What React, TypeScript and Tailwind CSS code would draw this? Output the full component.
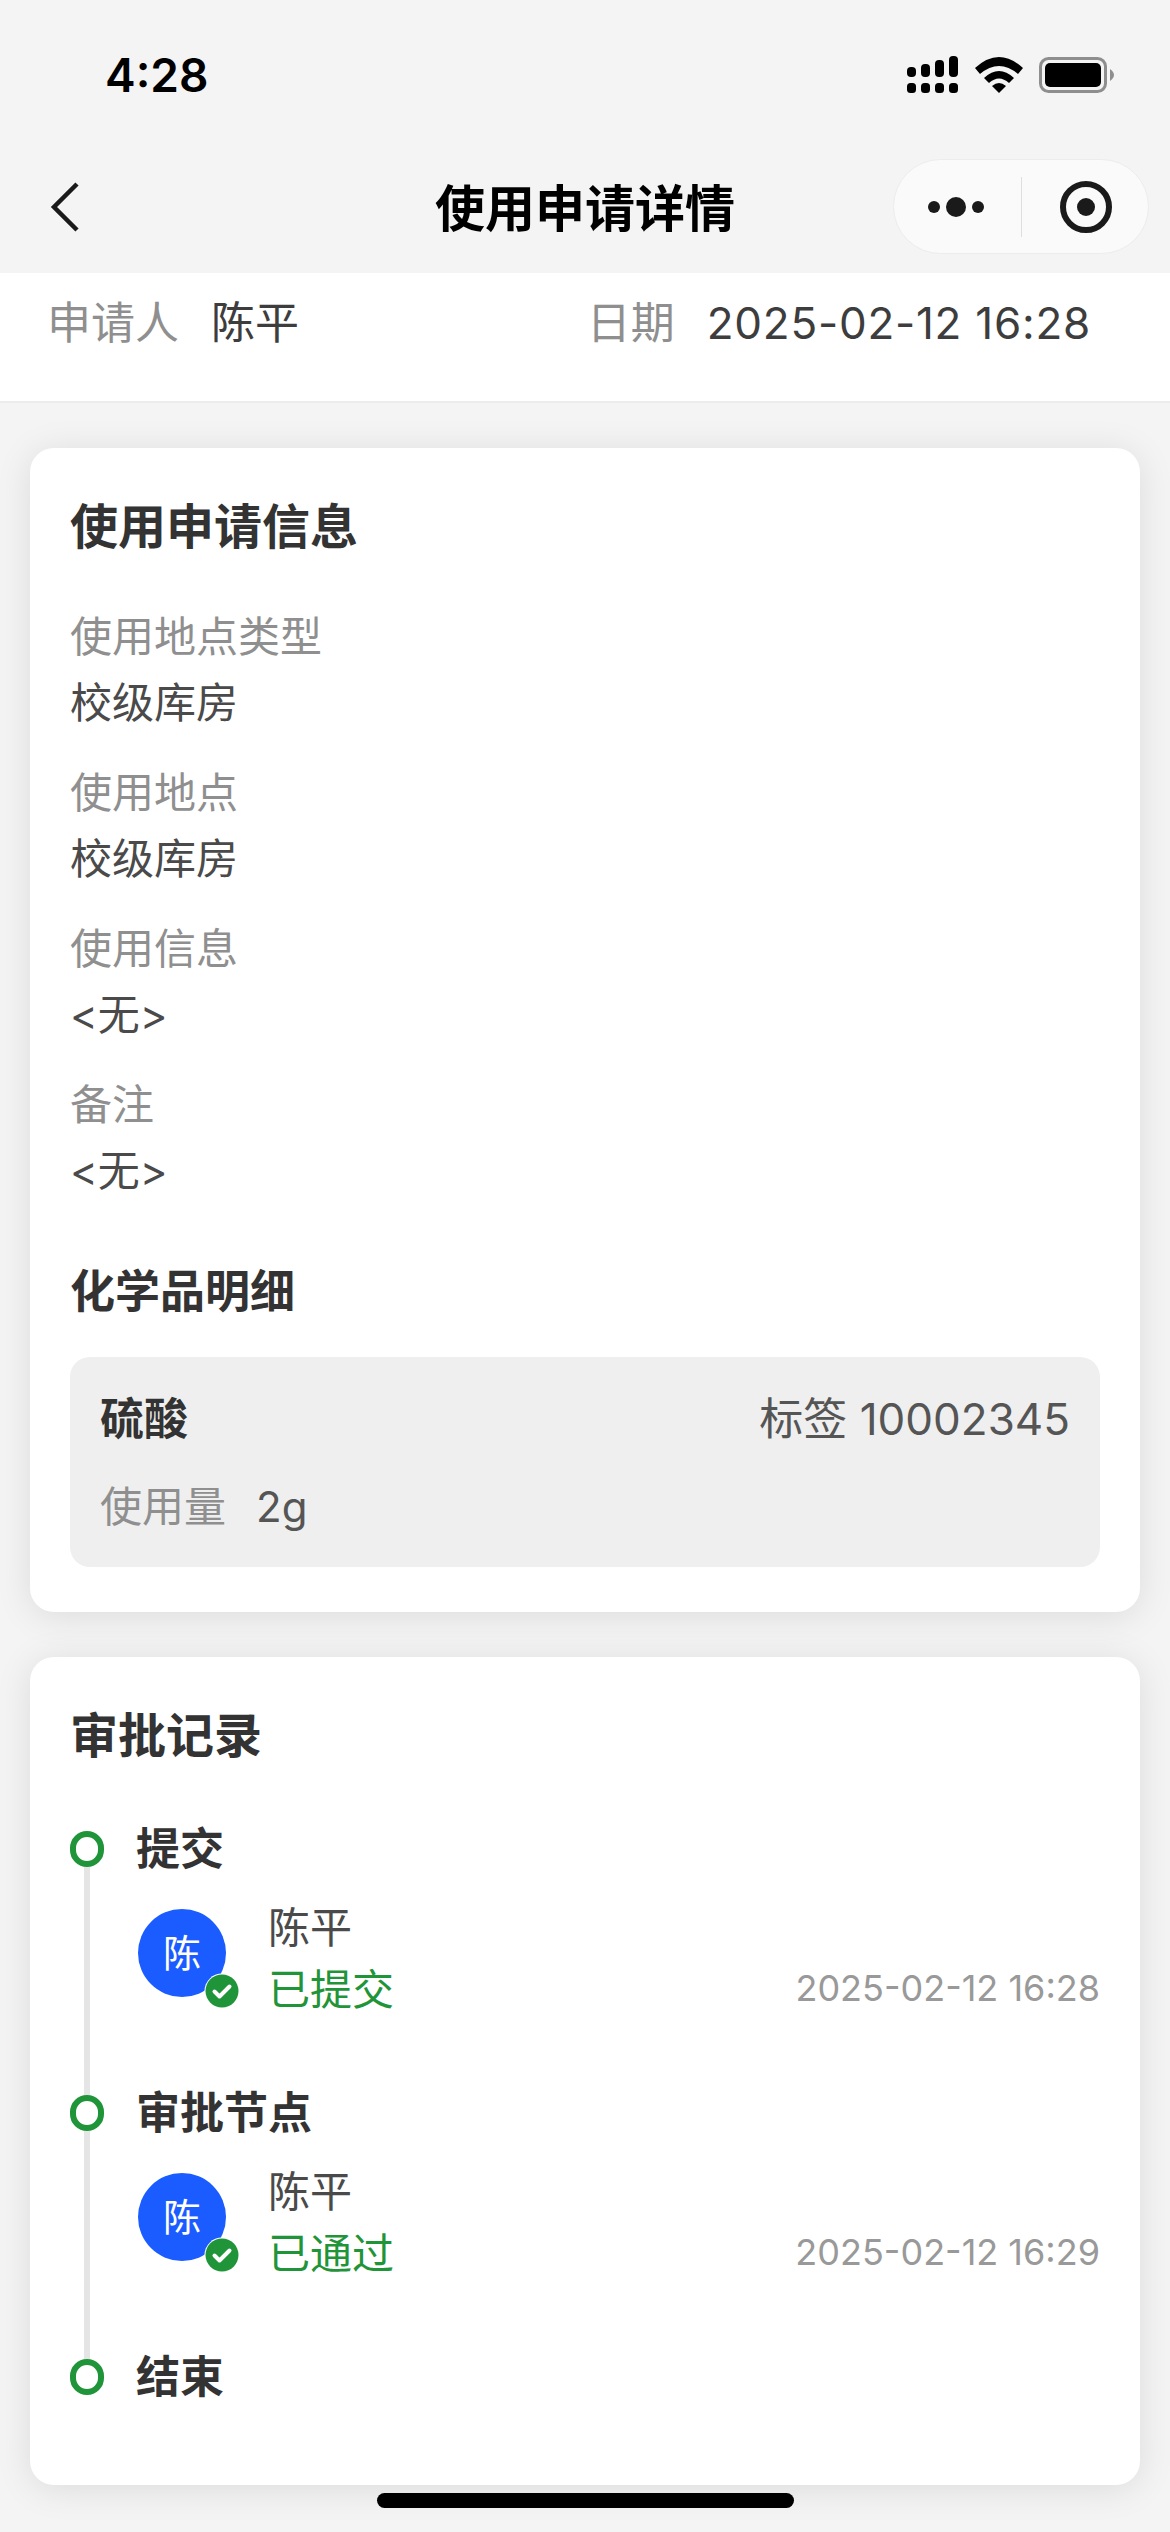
const FONT = "font-['Inter','Noto_Sans_CJK_SC',sans-serif]";

function StatusIcons() {
    return (
        <div className="flex items-center">
            <svg width="51" height="37" viewBox="0 0 51 37" fill="#000">
                <rect x="0" y="11" width="9" height="10" rx="4" />
                <rect x="14" y="8" width="9" height="13" rx="4" />
                <rect x="28" y="4" width="9" height="17" rx="4" />
                <rect x="42" y="0" width="9" height="21" rx="4" />
                <rect x="0" y="27" width="9" height="10" rx="3.5" />
                <rect x="14" y="27" width="9" height="10" rx="3.5" />
                <rect x="28" y="27" width="9" height="10" rx="3.5" />
                <rect x="42" y="27" width="9" height="10" rx="3.5" />
            </svg>
            <svg className="ml-[17px]" width="48" height="36" viewBox="0 0 48 36" fill="#000">
                <path d="M0 11 Q24 -11 48 11 L43 17 Q24 1 5 17 Z" />
                <path d="M9 21 Q24 7 39 21 L34 26 Q24 17 14 26 Z" />
                <path d="M17 29 Q24 23 31 29 L24 36 Z" />
            </svg>
            <svg className="ml-[16px]" width="76" height="36" viewBox="0 0 76 36">
                <rect x="1.5" y="1.5" width="65" height="33" rx="8" fill="none" stroke="#8e8e8e" strokeWidth="3" />
                <rect x="6" y="6" width="56" height="24" rx="5" fill="#000" />
                <path d="M71 12 L71 24 Q75 21 75 18 Q75 15 71 12 Z" fill="#8e8e8e" />
            </svg>
        </div>
    );
}

function Capsule() {
    return (
        <div className="flex h-[95px] w-[256px] items-center rounded-full border border-[#ececec] bg-[#fafafa]">
            <div className="flex flex-1 items-center justify-center gap-[6px] pr-[2px]">
                <span className="h-[12px] w-[12px] rounded-full bg-[#1a1a1a]" />
                <span className="h-[20px] w-[20px] rounded-full bg-[#1a1a1a]" />
                <span className="h-[12px] w-[12px] rounded-full bg-[#1a1a1a]" />
            </div>
            <div className="h-[60px] w-[1px] bg-[#dedede]" />
            <div className="flex flex-1 items-center justify-center pl-[2px]">
                <div className="flex h-[52px] w-[52px] items-center justify-center rounded-full border-[6px] border-[#1a1a1a]">
                    <span className="h-[18px] w-[18px] rounded-full bg-[#1a1a1a]" />
                </div>
            </div>
        </div>
    );
}

function Field({ label, value }: { label: string; value: string }) {
    return (
        <div>
            <div className="text-[42px] leading-[66px] text-[#8f8f8f]">{label}</div>
            <div className="text-[42px] leading-[66px] text-[#4a4a4a]">{value}</div>
        </div>
    );
}

function TimelineItem({ title, status, time, last }: { title: string; status?: string; time?: string; last?: boolean }) {
    return (
        <div className={`flex gap-[32px] ${last ? '' : 'h-[264px]'}`}>
            <div className="flex w-[34px] flex-col items-center">
                <div className="h-[36px] w-[34px] shrink-0 rounded-full border-[6px] border-[#1f9438] bg-white" />
                {!last && <div className="w-[6px] flex-1 bg-[#e5e5e5]" />}
            </div>
            <div className="min-w-0 flex-1">
                <div className="text-[44px] font-bold leading-[36px] text-[#333333]">{title}</div>
                {status && (
                    <div className="mt-[30px] flex items-start pl-[2px]">
                        <div className="relative mt-[12px] flex h-[88px] w-[88px] shrink-0 items-center justify-center rounded-full bg-[#1a5cff] text-[38px] text-white">
                            陈
                            <svg className="absolute bottom-[-12px] right-[-14px]" width="36" height="36" viewBox="0 0 36 36">
                                <circle cx="18" cy="18" r="17.5" fill="#ffffff" />
                                <circle cx="18" cy="18" r="16.5" fill="#1f9438" />
                                <path d="M10.5 18.5 L15.5 23.5 L25.5 13.5" fill="none" stroke="#ffffff" strokeWidth="4" strokeLinecap="round" strokeLinejoin="round" />
                            </svg>
                        </div>
                        <div className="ml-[42px] flex flex-1 items-end justify-between">
                            <div>
                                <div className="text-[42px] leading-[62px] text-[#4a4a4a]">陈平</div>
                                <div className="text-[42px] leading-[62px] text-[#1f9438]">{status}</div>
                            </div>
                            <div className="pb-[3px] text-[36px] leading-[60px] text-[#999999]">{time}</div>
                        </div>
                    </div>
                )}
            </div>
        </div>
    );
}

export default function App() {
    return (
        <div className={`relative h-[2532px] w-[1170px] overflow-hidden bg-[#f4f4f4] ${FONT}`}>
            {/* Status bar */}
            <div className="flex h-[146px] items-center justify-between pl-[105px] pr-[55px] pt-[3px]">
                <div className="text-[46px] font-semibold leading-none text-black">4:28</div>
                <StatusIcons />
            </div>

            {/* Nav bar */}
            <div className="relative flex h-[127px] items-center justify-center">
                <svg className="absolute left-[50px] top-[36px]" width="30" height="50" viewBox="0 0 30 50">
                    <path d="M27 2 L4 25 L27 48" fill="none" stroke="#1a1a1a" strokeWidth="4.5" />
                </svg>
                <div className="pb-[2px] text-[50px] font-bold leading-none text-black">使用申请详情</div>
                <div className="absolute right-[21px] top-[13px]">
                    <Capsule />
                </div>
            </div>

            {/* Summary */}
            <div className="flex h-[130px] justify-between border-b-2 border-[#ececec] bg-white pl-[47px] pr-[79px] pt-[22px] text-[44px] leading-[56px]">
                <div className="flex gap-[32px]">
                    <span className="text-[#8f8f8f]">申请人</span>
                    <span className="text-[#3d3d3d]">陈平</span>
                </div>
                <div className="flex gap-[32px]">
                    <span className="text-[#8f8f8f]">日期</span>
                    <span className="tracking-[0.75px] text-[#3d3d3d]">2025-02-12 16:28</span>
                </div>
            </div>

            <div className="flex flex-col gap-[45px] px-[30px] pt-[45px]">
                {/* Info card */}
                <div className="rounded-[24px] bg-white px-[40px] pb-[45px] pt-[49px] shadow-[0_4px_36px_rgba(0,0,0,0.1)]">
                    <div className="text-[48px] font-bold leading-[60px] text-[#333333]">使用申请信息</div>
                    <div className="mt-[47px] flex flex-col gap-[24px]">
                        <Field label="使用地点类型" value="校级库房" />
                        <Field label="使用地点" value="校级库房" />
                        <Field label="使用信息" value="<无>" />
                        <Field label="备注" value="<无>" />
                    </div>
                    <div className="mt-[58px] text-[45px] font-bold leading-[60px] text-[#333333]">化学品明细</div>
                    <div className="mt-[35px] rounded-[20px] bg-[#efefef] px-[30px] pb-[30px] pt-[32px]">
                        <div className="flex items-center justify-between leading-[60px]">
                            <span className="text-[44px] font-bold text-[#333333]">硫酸</span>
                            <span className="text-[44px] text-[#555555]">标签 10002345</span>
                        </div>
                        <div className="mt-[28px] flex gap-[30px] text-[42px] leading-[60px]">
                            <span className="text-[#8f8f8f]">使用量</span>
                            <span className="text-[#555555]">2g</span>
                        </div>
                    </div>
                </div>

                {/* Approval card */}
                <div className="rounded-[24px] bg-white px-[40px] pb-[90px] pt-[49px] shadow-[0_4px_36px_rgba(0,0,0,0.1)]">
                    <div className="text-[48px] font-bold leading-[60px] text-[#333333]">审批记录</div>
                    <div className="mt-[65px]">
                        <TimelineItem title="提交" status="已提交" time="2025-02-12 16:28" />
                        <TimelineItem title="审批节点" status="已通过" time="2025-02-12 16:29" />
                        <TimelineItem title="结束" last />
                    </div>
                </div>
            </div>

            {/* Home indicator */}
            <div className="absolute bottom-[24px] left-[377px] h-[15px] w-[417px] rounded-full bg-black" />
        </div>
    );
}
